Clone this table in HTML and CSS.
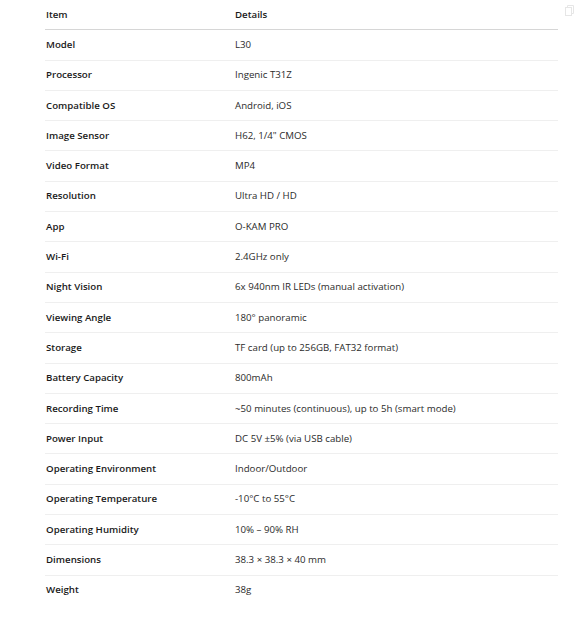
FILE: index.html
```html
<!DOCTYPE html>
<html>
<head>
<meta charset="utf-8">
<link rel="stylesheet" href="styles.css">
</head>
<body>
<div class="wrap">
  <table class="spec">
    <thead>
      <tr><th>Item</th><th>Details</th></tr>
    </thead>
    <tbody>
      <tr><td>Model</td><td>L30</td></tr>
      <tr><td>Processor</td><td>Ingenic T31Z</td></tr>
      <tr><td>Compatible OS</td><td>Android, iOS</td></tr>
      <tr><td>Image Sensor</td><td>H62, 1/4" CMOS</td></tr>
      <tr><td>Video Format</td><td>MP4</td></tr>
      <tr><td>Resolution</td><td>Ultra HD / HD</td></tr>
      <tr><td>App</td><td>O-KAM PRO</td></tr>
      <tr><td>Wi-Fi</td><td>2.4GHz only</td></tr>
      <tr><td>Night Vision</td><td>6x 940nm IR LEDs (manual activation)</td></tr>
      <tr><td>Viewing Angle</td><td>180° panoramic</td></tr>
      <tr><td>Storage</td><td>TF card (up to 256GB, FAT32 format)</td></tr>
      <tr><td>Battery Capacity</td><td>800mAh</td></tr>
      <tr><td>Recording Time</td><td>~50 minutes (continuous), up to 5h (smart mode)</td></tr>
      <tr><td>Power Input</td><td>DC 5V ±5% (via USB cable)</td></tr>
      <tr><td>Operating Environment</td><td>Indoor/Outdoor</td></tr>
      <tr><td>Operating Temperature</td><td>-10°C to 55°C</td></tr>
      <tr><td>Operating Humidity</td><td>10% – 90% RH</td></tr>
      <tr><td>Dimensions</td><td>38.3 × 38.3 × 40 mm</td></tr>
      <tr><td>Weight</td><td>38g</td></tr>
    </tbody>
  </table>
  <svg class="copy" width="9" height="11" viewBox="0 0 9 11"><rect x="0.5" y="2.5" width="6" height="8" fill="none" stroke="#e6e6e6"/><path d="M2.5 2.5V0.5h6v8h-2" fill="none" stroke="#e6e6e6"/></svg>
</div>
</body>
</html>
```
FILE: styles.css
```css
html, body { margin: 0; padding: 0; background: #fff; }
body { font-family: "Open Sans", "Noto Sans", sans-serif; font-size: 9.7px; color: #2b2b2b; }
.wrap { position: relative; padding: 0 24px 0 45px; }
.spec { width: 513px; border-collapse: collapse; margin-top: 0; }
.spec th, .spec td { text-align: left; padding: 0 0 0 1px; height: 29.3px; line-height: 14px; vertical-align: middle; }
.spec th { font-weight: 600; color: #1a1a1a; border-bottom: 1px solid #d6d6d6; }
.spec td { border-bottom: 1px solid #efefef; }
.spec td:first-child { font-weight: 600; color: #1a1a1a; width: 188px; }
.spec tbody tr:last-child td { border-bottom: none; }
.copy { position: absolute; left: 565px; top: 5px; }
```
